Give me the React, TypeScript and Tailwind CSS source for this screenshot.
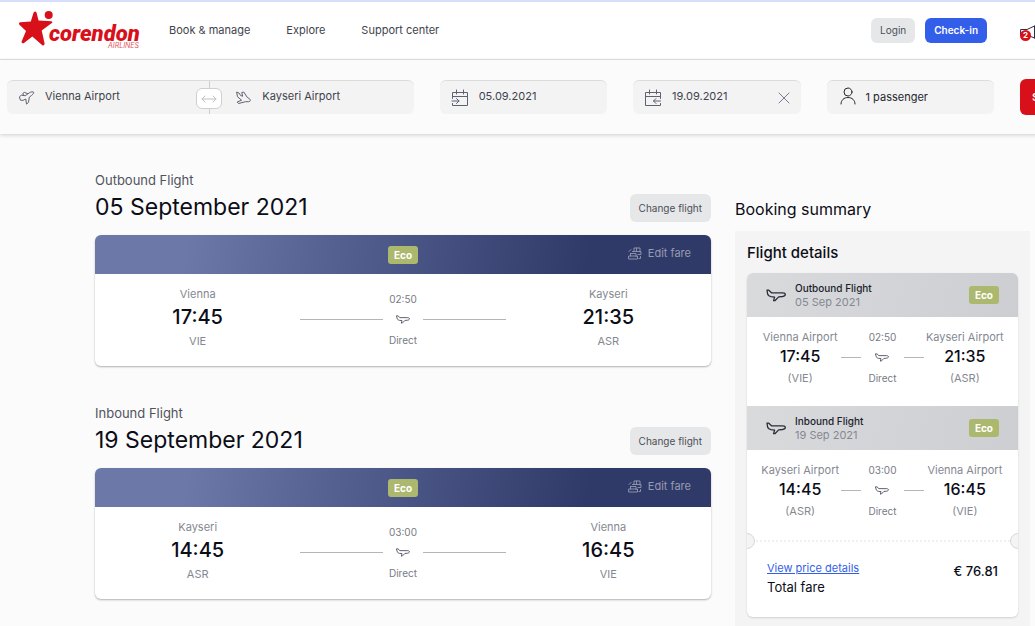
import React from "react";

type Svg = { className?: string };

const stroke = {
  fill: "none",
  stroke: "currentColor",
  strokeLinecap: "round" as const,
  strokeLinejoin: "round" as const,
};

function Logo() {
  return (
    <svg viewBox="0 0 124 40" className="h-10 w-[124px]" role="img" aria-label="Corendon Airlines">
      <path
        d="M15.500 1.800Q17.300-.6 18.600 1.800L20.500 9.500 33.500 10.200Q35.300 11 33.500 12.300L23.700 19.500 26.600 32.500Q26.500 35 24.300 34.200L14.300 25.500 6 32Q3.500 33 3.600 30.500L8 20 1.200 13.500Q.4 11.500 2.200 11.200L12.800 10.500z"
        fill="#d8101a"
      />
      <circle cx="30.700" cy="4" r="4" fill="#d8101a" />
      <text
        x="31"
        y="30"
        fill="#d8101a"
        fontFamily="Roboto, sans-serif"
        fontSize="22"
        fontWeight="900"
        fontStyle="italic"
      >
        corendon
      </text>
      <text
        x="121"
        y="37"
        fill="#dc5560"
        fontFamily="Inter, sans-serif"
        fontSize="7"
        fontStyle="italic"
        textAnchor="end"
      >
        AIRLINES
      </text>
    </svg>
  );
}

function TakeOff({ className }: Svg) {
  return (
    <svg viewBox="0 0 16 14" className={className} {...stroke} aria-hidden="true">
      <path d="M.7 5.600 2.300 4.200l3.900.5 4.200-2.900c1.500-1 3.800-1.200 4.200-.6.4.700-.7 2.300-2 3.200L10.300 6.200l-.8 5.200-2 1.700-.7-5.100-2.900 1.400-2.100-.2zM4.400 4.300 3.900 2.300l1.500-.9 3.100 1.200" />
    </svg>
  );
}

function Landing({ className }: Svg) {
  return (
    <svg viewBox="0 0 16 14" className={className} {...stroke} aria-hidden="true">
      <path d="M1 1.200 3 2l1.700 2.600 2 .6-1-3.600 2-.6 3.600 5.400 2.200 1.400c1.300.9.9 2.900-.8 2.900H9.500L2.500 12.500 1.200 11l4.400-1.800L1.800 6z" />
    </svg>
  );
}

function Plane({ className }: Svg) {
  return (
    <svg viewBox="0 0 20 13" className={className} {...stroke} strokeWidth={1.3} aria-hidden="true">
      <path d="M1 1.200h1.800l2.700 2.600h11.200c1.600 0 2.600.8 2.600 1.800S18 7.300 16.600 7.500l-3.900.4-3.800 3.800H7.600l1-3.600-3.700-.4C2.900 7.400 2 6.600 1.600 5z" />
    </svg>
  );
}

function CalendarArrow({ className, back }: Svg & { back?: boolean }) {
  return (
    <svg viewBox="0 0 18 18" className={className} {...stroke} aria-hidden="true">
      <path d="M1.500 7.500v-4h15v4M1.500 7.500h15M5.500 1v4M12.500 1v4" />
      {back ? (
        <path d="M16.500 7.500v2M16.500 14.500v2h-15v-9M16.500 12h-7M12 9.500 9.500 12l2.500 2.500" />
      ) : (
        <path d="M1.500 7.500v2M1.500 14.500v2h15v-9M1 12h7M5.500 9.500 8 12l-2.500 2.500" />
      )}
    </svg>
  );
}

function Person({ className }: Svg) {
  return (
    <svg viewBox="0 0 16 18" className={className} {...stroke} aria-hidden="true">
      <circle cx="8" cy="5" r="4" />
      <path d="M1 17c0-4 3-6.500 7-6.500s7 2.500 7 6.500" />
    </svg>
  );
}

function Megaphone({ className }: Svg) {
  return (
    <svg viewBox="0 0 20 16" className={className} {...stroke} aria-hidden="true">
      <path d="M1 4.500h6L14.500 1v12L7 10H1zM14.500 1h3v12h-3M3 10v4h4v-4" />
    </svg>
  );
}

function Seats({ className }: Svg) {
  return (
    <svg viewBox="0 0 14 13" className={className} {...stroke} strokeWidth={0.9} aria-hidden="true">
      <path d="M2.500 6.500h5.500v3M1 9h8.500v3H1zM2.500 6.500V9M6 4.500V1h6v4M4.500 4.500h8.500v3h-3M8.500 1v3.500M11 11.500h1.500V9.500M1 4.500l2-2" />
    </svg>
  );
}

const field =
  "flex h-[34px] min-w-0 items-center rounded-md border-t border-[#dcdcdc] bg-[#f3f3f3] text-[11px] text-[#3f434d]";
const textBox = "w-0 flex-1 bg-transparent pb-[2px] outline-none";
const grayButton = "shrink-0 rounded-md bg-[#e6e7e8] text-[10px] text-[#4b4f58]";

function Eco() {
  return (
    <span className="block rounded-[3px] bg-[#acb86e] px-[6px] text-[10px] leading-[18px] font-bold text-white">
      Eco
    </span>
  );
}

type Flight = {
  kind: string;
  date: string;
  shortDate: string;
  from: string;
  fromCode: string;
  depart: string;
  to: string;
  toCode: string;
  arrive: string;
  duration: string;
};

const flights: Flight[] = [
  {
    kind: "Outbound Flight",
    date: "05 September 2021",
    shortDate: "05 Sep 2021",
    from: "Vienna",
    fromCode: "VIE",
    depart: "17:45",
    to: "Kayseri",
    toCode: "ASR",
    arrive: "21:35",
    duration: "02:50",
  },
  {
    kind: "Inbound Flight",
    date: "19 September 2021",
    shortDate: "19 Sep 2021",
    from: "Kayseri",
    fromCode: "ASR",
    depart: "14:45",
    to: "Vienna",
    toCode: "VIE",
    arrive: "16:45",
    duration: "03:00",
  },
];

function Stop({ city, time, code }: { city: string; time: string; code: string }) {
  return (
    <div className="flex flex-col items-center text-[11px] text-[#858891]">
      <span className="leading-5">{city}</span>
      <span className="text-xl leading-[26px] font-medium text-[#0b0d17]">{time}</span>
      <span className="leading-[22px]">{code}</span>
    </div>
  );
}

function FlightSection({ f }: { f: Flight }) {
  return (
    <section>
      <div className="mb-[11px] flex items-end justify-between">
        <div>
          <p className="text-[13px] leading-5 text-[#50535c]">{f.kind}</p>
          <h2 className="text-[23px] leading-[34px] text-[#0b0d17]">{f.date}</h2>
        </div>
        <button className={`${grayButton} mb-0.5 h-7 px-[9px]`}>Change flight</button>
      </div>
      <div className="overflow-hidden rounded-md bg-white shadow-[0_1px_2px_rgba(0,0,0,0.3)]">
        <div className="grid h-[39px] grid-cols-[1fr_auto_1fr] items-center bg-linear-100 from-[#6b78a8] from-15% to-[#303a69] to-80% px-5">
          <span className="col-start-2">
            <Eco />
          </span>
          <button className="mb-[3px] flex items-center gap-[6px] justify-self-end text-[11px] text-[#959ab0]">
            <Seats className="h-[13px] w-[14px]" />
            Edit fare
          </button>
        </div>
        <div className="grid grid-cols-3 pt-[10px] pb-[14px]">
          <Stop city={f.from} time={f.depart} code={f.fromCode} />
          <div className="flex flex-col items-center pt-[5px] text-[10px] leading-5 text-[#777a84]">
            <span>{f.duration}</span>
            <div className="flex h-5 w-full items-center">
              <span className="h-px flex-1 bg-[#b4b5b9]" />
              <Plane className="mx-[13px] h-[9px] w-[14px] text-[#4d5060]" />
              <span className="h-px flex-1 bg-[#b4b5b9]" />
            </div>
            <span className="leading-[22px]">Direct</span>
          </div>
          <Stop city={f.to} time={f.arrive} code={f.toCode} />
        </div>
      </div>
    </section>
  );
}

function SummaryStop({ city, time, code }: { city: string; time: string; code: string }) {
  return (
    <div className="flex flex-col items-center text-[11px] whitespace-nowrap text-[#858891]">
      <span className="leading-5">{city} Airport</span>
      <span className="text-base leading-[18px] font-medium text-[#0b0d17]">{time}</span>
      <span className="leading-[26px]">({code})</span>
    </div>
  );
}

function SummaryFlight({ f }: { f: Flight }) {
  return (
    <div>
      <div className="flex h-11 items-center bg-linear-100 from-[#d9dadc] to-[#cdced2] px-[19px]">
        <Plane className="mr-[9px] h-[13px] w-[20px] text-[#2b2d3a]" />
        <div className="flex-1">
          <p className="text-[10px] leading-[14px] font-medium text-[#1b1e2c]">{f.kind}</p>
          <p className="text-[11px] leading-[14px] text-[#858891]">{f.shortDate}</p>
        </div>
        <Eco />
      </div>
      <div className="grid h-[89px] grid-cols-3 px-3 pt-[10px]">
        <SummaryStop city={f.from} time={f.depart} code={f.fromCode} />
        <div className="flex flex-col items-center text-[10px] text-[#777a84]">
          <span className="leading-5">{f.duration}</span>
          <div className="flex h-5 w-full items-center justify-between">
            <span className="h-px w-5 bg-[#b4b5b9]" />
            <Plane className="h-[9px] w-[14px] text-[#4d5060]" />
            <span className="h-px w-5 bg-[#b4b5b9]" />
          </div>
          <span className="leading-[22px]">Direct</span>
        </div>
        <SummaryStop city={f.to} time={f.arrive} code={f.toCode} />
      </div>
    </div>
  );
}

export default function App() {
  return (
    <div className="flex min-h-screen flex-col overflow-x-hidden bg-[#fbfbfb] font-['Inter',sans-serif] text-[#3f434d]">
      <header className="mr-[-5px] flex h-[60px] items-center border-t-2 border-b border-t-[#d6defb] border-b-[#e2e2e2] bg-white pl-[18px]">
        <a href="#home">
          <Logo />
        </a>
        <nav className="ml-[27px] flex flex-1 gap-9 text-[11px]">
          <a href="#manage">Book &amp; manage</a>
          <a href="#explore">Explore</a>
          <a href="#support">Support center</a>
        </nav>
        <button className={`${grayButton} h-[25px] px-[9px]`}>Login</button>
        <button className="ml-[10px] h-[25px] rounded-md bg-[#335eea] px-[9px] text-[10px] font-semibold text-white">
          Check-in
        </button>
        <button aria-label="Notifications" className="relative ml-[33px] shrink-0 pt-1">
          <Megaphone className="h-4 w-5 text-[#2b2d3a]" />
          <span className="absolute top-[9px] left-0 size-[11px] rounded-full bg-[#d8101a] text-center text-[8px] leading-[11px] font-bold text-white">
            2
          </span>
        </button>
      </header>

      <form
        className="mr-[-81px] grid h-[74px] grid-cols-[408fr_168fr_168fr_168fr_96px] items-start gap-[26px] bg-[#fbfbfb] pt-5 pl-[7px] shadow-[0_1px_4px_rgba(0,0,0,0.18)]"
        onSubmit={(e) => e.preventDefault()}
      >
        <div className={field}>
          <TakeOff className="ml-3 h-[14px] w-4 text-[#5e6270]" />
          <input aria-label="From" defaultValue="Vienna Airport" className={`${textBox} ml-[10px]`} />
          <div className="flex h-full flex-col items-center">
            <span className="w-px flex-1 bg-[#cfcfd2]" />
            <button
              type="button"
              aria-label="Swap airports"
              className="flex h-[21px] w-[26px] items-center justify-center rounded-md border border-[#cfcfd2] bg-white text-[#bfc0c5]"
            >
              <svg viewBox="0 0 16 8" className="h-2 w-4" {...stroke} aria-hidden="true">
                <path d="M1 4h14M4 1 1 4l3 3M12 1l3 3-3 3" />
              </svg>
            </button>
            <span className="h-[5px] w-px bg-[#cfcfd2]" />
          </div>
          <Landing className="ml-[14px] h-[14px] w-4 text-[#5e6270]" />
          <input aria-label="To" defaultValue="Kayseri Airport" className={`${textBox} ml-[10px]`} />
        </div>
        <div className={`${field} px-[11px]`}>
          <CalendarArrow className="size-[18px] shrink-0 text-[#5e6270]" />
          <input aria-label="Departure date" defaultValue="05.09.2021" className={`${textBox} ml-[10px]`} />
        </div>
        <div className={`${field} px-[11px]`}>
          <CalendarArrow back className="size-[18px] shrink-0 text-[#5e6270]" />
          <input aria-label="Return date" defaultValue="19.09.2021" className={`${textBox} ml-[10px]`} />
          <button type="button" aria-label="Clear return date" className="text-[#7a7e92]">
            <svg viewBox="0 0 12 12" className="size-3" {...stroke} aria-hidden="true">
              <path d="m1 1 10 10M11 1 1 11" />
            </svg>
          </button>
        </div>
        <button type="button" className={`${field} px-[13px] text-[#24262f]`}>
          <Person className="mr-[10px] mb-1 h-[18px] w-4" />
          <span>1 passenger</span>
        </button>
        <button className="-mt-px h-9 rounded-md bg-[#d8101a] pl-3 text-left text-[11px] font-semibold text-white">
          Search
        </button>
      </form>

      <main className="flex flex-1 gap-6 pr-[5px] pl-[95px]">
        <div className="flex flex-1 flex-col gap-[37px] pt-9">
          {flights.map((f) => (
            <FlightSection key={f.kind} f={f} />
          ))}
        </div>
        <aside className="flex w-[295px] shrink-0 flex-col pt-[63px]">
          <h2 className="mb-[10px] text-base leading-6 text-[#0b0d17]">Booking summary</h2>
          <div className="flex-1 bg-[#f4f4f4] px-3 pt-3 pb-2">
            <h3 className="mb-[10px] text-[15px] leading-5 font-medium text-[#0b0d17]">Flight details</h3>
            <div className="overflow-hidden rounded-md bg-white shadow-[0_1px_2px_rgba(0,0,0,0.15)]">
              {flights.map((f) => (
                <SummaryFlight key={f.kind} f={f} />
              ))}
              <div className="relative mt-px border-t-2 border-dotted border-[#f0f0f2] px-5 pt-4 pb-[21px]">
                <span className="absolute -top-[9px] -left-2 size-4 rounded-full border border-[#d5d6d8] bg-[#f4f4f4]" />
                <span className="absolute -top-[9px] -right-2 size-4 rounded-full border border-[#d5d6d8] bg-[#f4f4f4]" />
                <div className="flex justify-between">
                  <div>
                    <a href="#price" className="block text-[11px] leading-5 text-[#335eea] underline">
                      View price details
                    </a>
                    <p className="text-[13px] leading-[18px] text-[#0b0d17]">Total fare</p>
                  </div>
                  <span className="pt-[3px] text-[13px] leading-5 font-medium text-[#0b0d17]">€ 76.81</span>
                </div>
              </div>
            </div>
          </div>
        </aside>
      </main>
    </div>
  );
}
